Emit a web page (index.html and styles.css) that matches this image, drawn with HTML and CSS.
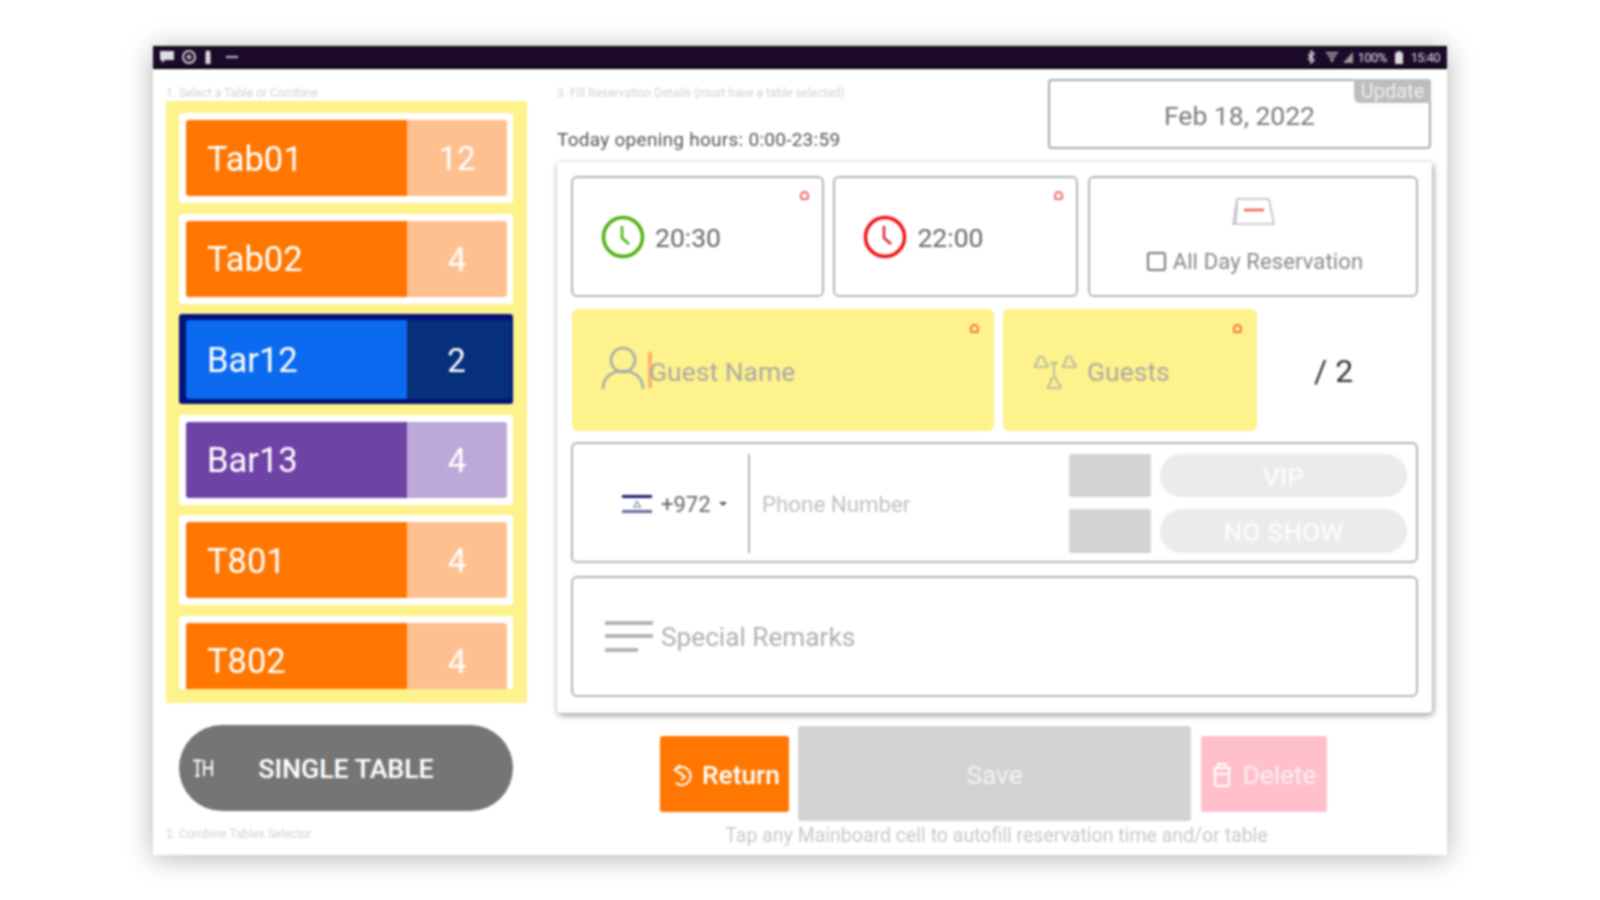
FILE: index.html
```html
<!DOCTYPE html>
<html lang="en">
<head>
<meta charset="utf-8">
<title>Reservation</title>
<link rel="stylesheet" href="styles.css">
</head>
<body>
<div class="device">
  <div class="status">
    <div class="status-left">
      <svg class="si" width="16" height="14" viewBox="0 0 16 14"><path d="M1 1h14v9H6l-3 3v-3H1z" fill="#ddd"/></svg>
      <svg class="si" width="16" height="16" viewBox="0 0 16 16"><circle cx="8" cy="8" r="6" fill="none" stroke="#ccc" stroke-width="2"/><circle cx="8" cy="8" r="2.5" fill="#aaa"/></svg>
      <svg class="si" width="10" height="15" viewBox="0 0 10 15"><circle cx="5" cy="3" r="2.6" fill="#ddd"/><rect x="2.5" y="5" width="5" height="9" fill="#ddd"/></svg>
      <svg class="si si-dash" width="12" height="4" viewBox="0 0 12 4"><rect y="1" width="12" height="2" fill="#bbb"/></svg>
    </div>
    <div class="status-right">
      <svg width="8" height="14" viewBox="0 0 8 14"><path d="M1 4l6 6-3 3V1l3 3-6 6" fill="none" stroke="#ddd" stroke-width="1.4"/></svg>
      <svg class="si-wifi" width="12" height="12" viewBox="0 0 12 12"><path d="M0 2h12M2 5h8M4 8h4M5 10h2" stroke="#ccc" stroke-width="1.6"/></svg>
      <svg width="10" height="12" viewBox="0 0 10 12"><path d="M0 12L10 1v11z" fill="#999"/></svg>
      <span>100%</span>
      <svg class="si-batt" width="8" height="13" viewBox="0 0 8 13"><path d="M2.5 0h3v1.500H8V13H0V1.500h2.500z" fill="#ddd"/></svg>
      <span>15:40</span>
    </div>
  </div>

  <div class="main">
    <section class="left">
      <p class="step step-first">1. Select a Table or Combine</p>
      <div class="panel">
        <div class="tables">
          <div class="tile"><div class="name orange">Tab01</div><div class="count orange-l">12</div></div>
          <div class="tile"><div class="name orange">Tab02</div><div class="count orange-l">4</div></div>
          <div class="tile tile-selected"><div class="name blue">Bar12</div><div class="count blue-d">2</div></div>
          <div class="tile"><div class="name purple">Bar13</div><div class="count purple-l">4</div></div>
          <div class="tile"><div class="name orange">T801</div><div class="count orange-l">4</div></div>
          <div class="tile"><div class="name orange">T802</div><div class="count orange-l">4</div></div>
        </div>
      </div>
      <button class="single">
        <svg class="single-icon" width="22" height="20" viewBox="0 0 22 20"><path d="M1 2.500h9M5.500 2.500V18M3.500 18h4M12 2v16M20 2v16M12 10h8" fill="none" stroke="#fff" stroke-width="1.800"/></svg>
        SINGLE TABLE
      </button>
      <p class="step step-last">2. Combine Tables Selector</p>
    </section>

    <section class="right">
      <header class="head">
        <div class="head-text">
          <p class="step step-first">3. Fill Reservation Details (must have a table selected)</p>
          <p class="hours">Today opening hours: 0:00-23:59</p>
        </div>
        <div class="date">Feb 18, 2022<span class="update">Update</span></div>
      </header>

      <div class="card">
        <div class="row row-times">
          <div class="box box-time">
            <svg class="clock" width="44" height="44" viewBox="0 0 44 44"><circle cx="22" cy="22" r="19.500" fill="none" stroke="#4fae0c" stroke-width="3.500"/><path d="M21 11v12l7 6" fill="none" stroke="#4fae0c" stroke-width="2.500"/></svg>
            <span>20:30</span>
            <i class="req"></i>
          </div>
          <div class="box box-time">
            <svg class="clock" width="44" height="44" viewBox="0 0 44 44"><circle cx="22" cy="22" r="19.500" fill="none" stroke="#f01010" stroke-width="3.500"/><path d="M21 11v12l7 6" fill="none" stroke="#e02030" stroke-width="2.500"/></svg>
            <span>22:00</span>
            <i class="req"></i>
          </div>
          <div class="box box-allday">
            <svg width="46" height="30" viewBox="0 0 46 30"><path d="M7 2h32l5 25H3z M3 27l3-2 1-23" fill="#fff" stroke="#bbb" stroke-width="1.500" stroke-linejoin="round"/><path d="M14 13h20" stroke="#f0604c" stroke-width="2.500"/></svg>
            <label class="allday"><span class="check"></span>All Day Reservation</label>
          </div>
        </div>

        <div class="row row-guest">
          <div class="yellow yellow-name">
            <svg class="person" width="44" height="46" viewBox="0 0 44 46"><circle cx="22" cy="15" r="12" fill="none" stroke="#a7a7ad" stroke-width="2.500"/><path d="M2 44c0-12 9-18 20-18s20 6 20 18" fill="none" stroke="#a7a7ad" stroke-width="2.500"/></svg>
            <span class="caret"></span><span class="ph">Guest Name</span>
            <i class="req req-y"></i>
          </div>
          <div class="yellow yellow-guests">
            <svg class="people" width="48" height="40" viewBox="0 0 48 40"><g fill="none" stroke="#aaa" stroke-width="1.500"><path d="M4 17c0-3 2-4 3-6 -2-4 6-7 6-1 0 2 1 2 3 4 1 1 1 3 0 3z"/><path d="M32 17c0-3 2-4 3-6-2-4 6-7 6-1 0 2 1 2 3 4 1 1 1 3 0 3z"/><path d="M17 38c0-3 2-4 3-6-2-4 6-7 6-1 0 2 1 2 3 4 1 1 1 3 0 3z"/><path d="M19 13h8M23 13v13"/></g></svg>
            <span class="ph">Guests</span>
            <i class="req req-y"></i>
          </div>
          <div class="capacity">/ 2</div>
        </div>

        <div class="box row-phone">
          <div class="code">
            <svg width="30" height="20" viewBox="0 0 30 20"><rect y="0" width="30" height="20" fill="#fff"/><rect y="1" width="30" height="3" fill="#1c1c78"/><rect y="16" width="30" height="3" fill="#6a6a9c"/><path d="M15 7l3.500 6h-7z" fill="none" stroke="#66668f"/></svg>
            <span class="code-num">+972</span><span class="code-arrow"></span>
          </div>
          <div class="phone-ph">Phone Number</div>
          <div class="flags">
            <span class="swatch"></span><span class="pill">VIP</span>
            <span class="swatch"></span><span class="pill">NO SHOW</span>
          </div>
        </div>

        <div class="box row-remarks">
          <svg width="49" height="34" viewBox="0 0 49 34"><path d="M1 3h48M1 16h48M1 30h33" stroke="#aaa" stroke-width="3.500"/></svg>
          <span class="ph ph-remarks">Special Remarks</span>
        </div>
      </div>

      <div class="actions">
        <button class="act act-return">
          <svg width="24" height="26" viewBox="0 0 24 26"><path d="M6 8a9 9 0 1 1 1 13M11 3L6 8l5 4M10 10l6 5-4 3" fill="none" stroke="#fff" stroke-width="2"/></svg>
          Return
        </button>
        <button class="act act-save">Save</button>
        <button class="act act-delete">
          <svg width="22" height="26" viewBox="0 0 22 26"><path d="M2 6h18M7 6V2h8v4M4 6v16q0 2 2 2h10q2 0 2-2V6M4 12h14" fill="none" stroke="#fff" stroke-width="2"/></svg>
          Delete
        </button>
      </div>
      <p class="hint">Tap any Mainboard cell to autofill reservation time and/or table</p>
    </section>
  </div>
</div>
</body>
</html>
```

FILE: styles.css
```css
* { box-sizing: border-box; }
html, body { margin: 0; height: 100%; background: #fff; }
body {
  padding: 46px 153px 45px;
  font-family: Roboto, "Liberation Sans", sans-serif;
  overflow: hidden;
}
p { margin: 0; }
button { font-family: inherit; border: 0; padding: 0; }

.device {
  width: 1294px;
  height: 809px;
  background: #fff;
  display: flex;
  flex-direction: column;
  box-shadow: 0 3px 26px rgba(0, 0, 0, .3);
  filter: blur(.9px);
}

.status {
  height: 23px;
  flex: none;
  background: #1d0a2b;
  border-top: 1px solid #000;
  border-bottom: 2px solid #000;
  display: flex;
  justify-content: space-between;
  align-items: center;
  padding: 0 7px 0 6px;
  color: #ddd;
  font-size: 13px;
}
.status-left, .status-right { display: flex; align-items: center; gap: 6px; }
.status-right { gap: 5px; letter-spacing: -.6px; }
.si-dash { margin-left: 7px; }
.si-wifi { margin-left: 6px; }
.si-batt { margin: 0 3px 0 3px; }

.main { flex: 1; display: flex; min-height: 0; }

.left { width: 374px; padding-left: 13px; flex: none; }
.right { width: 875px; margin-left: 30px; flex: none; }

.step { font-size: 12px; line-height: 14px; color: #d2d2d2; }
.step-first { padding-top: 17px; }
.step-last { margin-top: 16px; }

.panel {
  width: 361px;
  height: 602px;
  margin-top: 1px;
  background: #fdf28c;
  padding: 12px 14px 14px 13px;
}
.tables { height: 100%; overflow: hidden; display: grid; grid-auto-rows: 90px; row-gap: 10.6px; }
.tile {
  background: #fff;
  padding: 7px 6px 7px 7px;
  display: flex;
  border-radius: 3px;
}
.tile-selected { background: #02127a; padding: 6px 2px 5px 7px; }
.name, .count { display: flex; align-items: center; padding-top: 1px; color: #fff; font-size: 34.500px; }
.name { width: 221px; padding-left: 21px; border-radius: 3px 0 0 3px; }
.count { flex: 1; justify-content: center; font-size: 33px; border-radius: 0 3px 3px 0; }
.tile-selected .count { padding-right: 5px; }
.orange { background: #ff7600; }
.orange-l { background: #ffc08f; }
.blue { background: #0b6af0; }
.blue-d { background: #07307a; }
.purple { background: #6f42a6; }
.purple-l { background: #bda9d8; }

.single {
  display: flex;
  position: relative;
  align-items: center;
  justify-content: center;
  width: 334px;
  height: 86px;
  margin: 22px 0 0 13px;
  padding-top: 2px;
  background: #757575;
  border-radius: 43px;
  color: #fff;
  font-size: 26.700px;
  font-weight: 500;
}
.single-icon { position: absolute; left: 13px; top: 33px; }

.head { height: 93px; display: flex; justify-content: space-between; }
.hours { margin-top: 28px; font-size: 19px; line-height: 24px; letter-spacing: .27px; color: #555; }
.date {
  position: relative;
  width: 383px;
  height: 70px;
  margin: 10px 1px 0 0;
  padding-top: 2px;
  border: 2px solid #aaa;
  border-radius: 4px;
  display: flex;
  align-items: center;
  justify-content: center;
  font-size: 26.500px;
  color: #7a7a7a;
}
.update {
  position: absolute;
  top: -2px;
  right: -2px;
  width: 77px;
  height: 24px;
  background: #bdbdbd;
  border-radius: 0 4px 0 6px;
  color: #eee;
  font-size: 20px;
  line-height: 24px;
  text-align: center;
}

.card {
  width: 875px;
  height: 551px;
  padding: 14px 14px 0 14px;
  background: #fff;
  border-radius: 4px;
  box-shadow: 1px 2px 6px rgba(0, 0, 0, .45);
}
.box {
  position: relative;
  border: 2px solid #b4b4b4;
  border-radius: 6px;
  background: #fff;
}
.row { display: flex; }
.row-times { gap: 9px; height: 121px; }
.box-time { display: flex; align-items: center; padding-left: 28px; gap: 10px; font-size: 26.500px; color: #666; }
.box-time span { padding-top: 2px; }
.box-time:nth-child(1) { width: 254px; }
.box-time:nth-child(2) { width: 245px; }
.clock { flex: none; }
.box-allday {
  width: 331px;
  margin-left: 1px;
  display: flex;
  flex-direction: column;
  align-items: center;
  padding-top: 19px;
  gap: 22px;
}
.allday { display: flex; align-items: center; gap: 7px; margin-left: 4px; font-size: 22px; letter-spacing: .12px; color: #888; }
.check { width: 19px; height: 19px; border: 2px solid #777; border-radius: 3px; }

.req {
  position: absolute;
  top: 13px;
  right: 13px;
  width: 9px;
  height: 9px;
  border: 2px solid #f06a6a;
  border-radius: 50% 50% 2px 2px;
}
.req-y { border-color: #f0793c; top: 15px; right: 15px; }

.row-guest { gap: 9px; height: 122px; margin-top: 12px; }
.yellow {
  position: relative;
  background: #fdf28c;
  border-radius: 6px;
  display: flex;
  align-items: center;
}
.yellow-name { width: 422px; margin-left: 1px; padding-left: 29px; }
.yellow-guests { width: 254px; padding-left: 28px; gap: 8px; }
.person { margin-top: -4px; }
.caret { width: 4px; height: 36px; margin: 0 0 0 3px; background: #f9b26f; }
.ph { font-size: 26.500px; padding-top: 2px; color: #a9a9a4; }
.yellow-name .ph { margin-left: -3px; }
.capacity { flex: 1; padding-left: 48px; padding-top: 1px; display: flex; align-items: center; font-size: 32px; color: #333; }

.row-phone {
  height: 121px;
  margin: 11px 0 0;
  display: flex;
  align-items: stretch;
  padding: 10px 9px 8px 0;
}
.code {
  width: 177px;
  flex: none;
  border-right: 2px solid #b4b4b4;
  display: flex;
  align-items: center;
  padding-left: 49px;
  padding-top: 1px;
  gap: 9px;
  font-size: 22px;
  color: #666;
}
.code-arrow { width: 0; height: 0; border: 4px solid transparent; border-top-color: #555; margin: 4px 0 0 -1px; }
.phone-ph { flex: 1; display: flex; align-items: center; padding: 0 0 0 12px; font-size: 22.300px; color: #c0c0c0; }
.flags {
  width: 338px;
  display: grid;
  grid-template-columns: 82px 247px;
  grid-template-rows: 43px 44px;
  column-gap: 9px;
  row-gap: 12px;
}
.swatch { background: #d3d3d3; border-radius: 2px; }
.pill {
  background: #ebebeb;
  border-radius: 22px;
  color: #fbfbfb;
  font-size: 26.500px;
  font-weight: 500;
  padding-top: 1px;
  display: flex;
  align-items: center;
  justify-content: center;
}

.row-remarks {
  height: 121px;
  margin: 13px 0 0;
  display: flex;
  align-items: center;
  padding-left: 31px;
  gap: 8px;
}
.ph-remarks { font-size: 26.200px; padding-top: 1px; color: #b0b0b0; }

.actions {
  display: flex;
  align-items: center;
  justify-content: center;
  gap: 9px;
  width: 873px;
  margin-top: 13px;
}
.act {
  height: 76px;
  border-radius: 3px;
  color: #fff;
  font-size: 26.300px;
  font-weight: 500;
  padding-top: 2px;
  display: flex;
  align-items: center;
  justify-content: center;
  gap: 9px;
}
.act-return { width: 129px; background: #ff7600; }
.act-save { width: 393px; height: 95px; background: #d3d3d3; color: #f2f2f2; font-weight: 400; }
.act-delete { width: 126px; margin-left: 1px; background: #ffc0cb; color: #fbeef0; font-weight: 400; }

.hint { width: 875px; margin-top: 4px; text-align: center; font-size: 19.500px; line-height: 21px; color: #c8c8c8; padding-left: 4px; }
```
